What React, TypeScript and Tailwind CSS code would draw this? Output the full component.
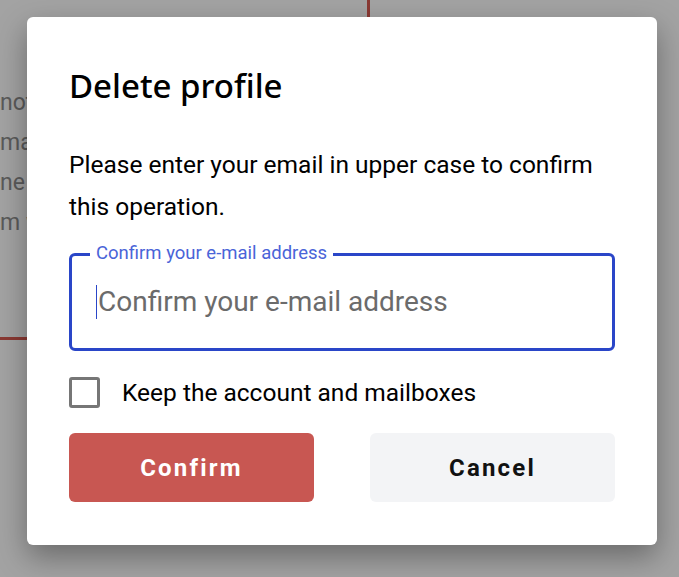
import React from "react";

export default function App() {
  return (
    <div className="relative h-[577px] w-[679px] overflow-hidden bg-white" style={{ fontFamily: "Roboto, 'Noto Sans', sans-serif" }}>
      {/* underlying page */}
      <div className="flex h-full items-start">
        <div className="flex h-[340px] w-[370px] flex-col border-b-[3px] border-r-[3px] border-[#d85a50]">
          <div className="mt-[83px] flex flex-col text-[23px] leading-[40px] text-[#8e8e8e]">
            <span>not</span>
            <span>ma</span>
            <span>ne</span>
            <span>m w</span>
          </div>
        </div>
      </div>

      {/* overlay */}
      <div className="absolute inset-0 bg-black/[0.36] pl-[27px] pt-[17px]">
        <div className="flex w-[630px] flex-col rounded-[6px] bg-white px-[42px] pb-[43px] pt-[47px] shadow-[0_12px_30px_rgba(0,0,0,0.35)]">
          <h1
            className="text-[33px] font-medium leading-[44px] text-black"
            style={{ fontFamily: "'Noto Sans', Roboto, sans-serif" }}
          >
            Delete profile
          </h1>
          <p className="mt-[36px] text-[24.5px] leading-[42px] text-black">
            Please enter your email in upper case to confirm this operation.
          </p>
          <div className="relative mt-[25px] h-[98px] rounded-[6px] border-[3px] border-[#2a46c8]">
            <span className="absolute left-[18px] top-[-15px] bg-white px-[6px] text-[18.5px] leading-[24px] text-[#4a64d8]">
              Confirm your e-mail address
            </span>
            <div className="flex h-full items-center pl-[24px]">
              <span className="mr-[1px] h-[34px] w-[1px] bg-[#2a46c8]" />
              <span className="text-[28px] leading-[34px] text-[#6b6b6b]">Confirm your e-mail address</span>
            </div>
          </div>
          <div className="mt-[26px] flex items-center gap-[22px]">
            <div className="h-[31px] w-[31px] rounded-[3px] border-[3px] border-[#767676]" />
            <span className="text-[24.5px] leading-[30px] text-black">Keep the account and mailboxes</span>
          </div>
          <div className="mt-[25px] flex justify-between">
            <button className="flex h-[69px] w-[245px] items-center justify-center rounded-[6px] bg-[#c85752] text-[24px] font-bold tracking-[2.2px] text-white">
              Confirm
            </button>
            <button className="flex h-[69px] w-[245px] items-center justify-center rounded-[6px] bg-[#f3f4f6] text-[24px] font-bold tracking-[2.2px] text-[#111]">
              Cancel
            </button>
          </div>
        </div>
      </div>
    </div>
  );
}
